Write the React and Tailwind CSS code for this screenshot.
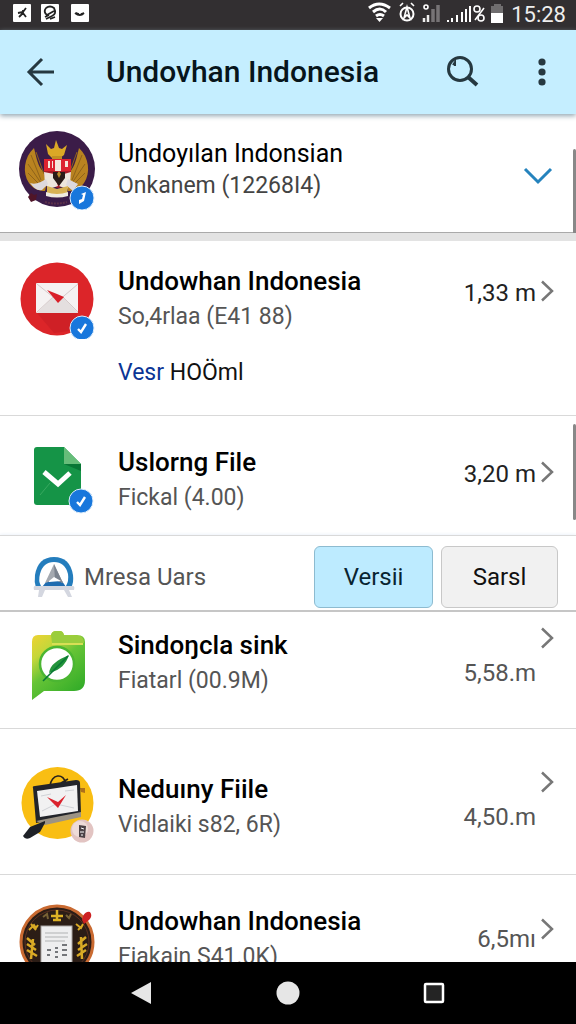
import React from "react";

function Badge({ x, y, mark }) {
  return (
    <g>
      <circle cx={x} cy={y} r="12" fill="#1877dc" stroke="#dcecfb" strokeWidth="1" />
      {mark || (
        <path d={`M${x - 4} ${y + 1}l3 3 5-8`} fill="none" stroke="#fff" strokeWidth="2.4" />
      )}
    </g>
  );
}

const iconClass = "h-20 w-20 shrink-0";

function GarudaIcon() {
  return (
    <svg viewBox="18 130 80 80" className={iconClass} aria-hidden="true">
      <circle cx="57" cy="169" r="38" fill="#3b1c48" />
      <path d="M34 148c-10 9-12 25-5 35 4 6 10 8 16 8l3-13-7-9c-4-6-5-14-7-21z" fill="#b98320" />
      <path d="M79 148c10 9 12 25 5 35-4 6-10 8-16 8l-3-13 7-9c4-6 5-14 7-21z" fill="#b98320" />
      <path d="M31 155l10 25M28 164l13 19M28 173l13 13M36 152l8 22M82 155l-10 25M85 164l-13 19M85 173l-13 13M77 152l-8 22" fill="none" stroke="#8f631a" strokeWidth="1" />
      <path d="M46 144l5 5 3-1 2-8 3 8 3 1 5-4-3 10-4 3h-8l-4-4z" fill="#dba826" />
      <path d="M52 156h10v5H52z" fill="#c18f22" />
      <path d="M44 159h27v13c0 8-6 14-13 16-8-2-14-8-14-16z" fill="#a81b28" />
      <path d="M44 159h27v12H44z" fill="#dc2330" />
      <path d="M55 160h6v11h-6zM48 161h2v7h-2zM52 161h1v7h-1zM65 161h3v6h-3z" fill="#f4e7dc" />
      <path d="M44 172l10 2 4 12-9 3-4-5zM71 172l-7 2-5 12 8 3 3-5z" fill="#ede6dd" />
      <path d="M53 172h12v6l-6 8-6-8z" fill="#291b18" />
      <path d="M57 174l2-3 2 3-2 4z" fill="#bb8c29" />
      <path d="M30 183c6 2 11-1 16-4l2 5-6 6c-5 1-8-2-12-7zM68 179l10 5-5 7-7-6z" fill="#ddd9de" />
      <path d="M47 186l10 3 11-3-1 9q-10 3-20 0z" fill="#d8b254" />
      <path d="M46 192q11 4 22 0v4q-11 3-22 0z" fill="#f0ebdf" />
      <path d="M28 197l3-4 3 2 3-1-1 6-5 2z" fill="#501528" />
      <path d="M45 202q11 3 22 0" fill="none" stroke="#5b3049" strokeWidth="2" strokeDasharray="2 1" />
      <Badge x={82} y={198} mark={<path d="M81 194l5-2-2 9-5 3v-4l3-1 1-4z" fill="#fff" />} />
    </svg>
  );
}

function MailIcon() {
  return (
    <svg viewBox="18 259 80 80" className={iconClass} aria-hidden="true">
      <circle cx="57" cy="299" r="36.5" fill="#dc2529" />
      <path d="M37 313h41l-9 18-15 2z" fill="#cf2026" />
      <rect x="36" y="283" width="42" height="30" rx="1" fill="#f5f2f2" />
      <path d="M37 313l16-16 5 4 5-4 15 16z" fill="#e4dfdf" />
      <path d="M37 284l21 17 20-17M37 312l16-15M78 312l-15-15" fill="none" stroke="#d5caca" strokeWidth="1" />
      <path d="M47 290l10 4 7 3-6 6z" fill="#d92029" />
      <Badge x={82} y={328} />
    </svg>
  );
}

function FileIcon() {
  return (
    <svg viewBox="18 440 80 80" className={iconClass} aria-hidden="true">
      <path d="M37 447h27l17 17v38q0 3-3 3H37q-3 0-3-3v-52q0-3 3-3z" fill="#159447" />
      <path d="M64 447l17 17H64z" fill="#66bd79" />
      <path d="M64 464h17v7z" fill="#087635" />
      <path d="M50 483l-10 12" stroke="#38a960" strokeWidth="1" />
      <path d="M44 472l14 12 12-11" fill="none" stroke="#fff" strokeWidth="5" />
      <Badge x={81} y={501} />
    </svg>
  );
}

function LeafIcon() {
  return (
    <svg viewBox="18 623 80 80" className={iconClass} aria-hidden="true">
      <defs>
        <linearGradient id="leaf" x1="0" y1="0" x2=".65" y2="1">
          <stop offset="0" stopColor="#f5d231" />
          <stop offset=".3" stopColor="#c5d73a" />
          <stop offset=".55" stopColor="#66c436" />
          <stop offset="1" stopColor="#35ad29" />
        </linearGradient>
      </defs>
      <path d="M38 635h13q1-4 5-4h4q3 0 4 4h13q8 0 8 7v38q0 11-11 11H44l-12 9v-58q0-7 6-7z" fill="url(#leaf)" />
      <path d="M51 635q1-4 5-4h4q3 0 4 4l16 1q4 2 4 7H52z" fill="#9acd3d" />
      <path d="M52 644h31" stroke="#d8df55" strokeWidth="2" />
      <circle cx="57" cy="664" r="17" fill="#fff" stroke="#4bb632" strokeWidth="2.5" />
      <path d="M49 673c1-8 8-13 20-18-3 9-9 15-17 17z" fill="#24943b" />
      <path d="M43 681l25-25" stroke="#087834" strokeWidth="1.6" />
    </svg>
  );
}

function BoardIcon() {
  return (
    <svg viewBox="18 767 80 80" className={iconClass} aria-hidden="true">
      <circle cx="57.500" cy="803" r="36" fill="#f9be13" />
      <path d="M50 786c1-12 14-14 16-2M61 783l7-4" fill="none" stroke="#28221d" strokeWidth="1.6" />
      <path d="M80 788h5v5l-4-1z" fill="#ad701b" />
      <path d="M33 788q-1-2 2-2l41-6q4 0 4 3l1 31-45 9z" fill="#22242a" />
      <path d="M37 791l40-6 1 26-38 6z" fill="#f1f1f2" />
      <path d="M41 796l10-2M65 791l9-1M42 811l14-7 18 4" fill="none" stroke="#d0d2d7" strokeWidth="1" />
      <path d="M47 797l11 11 8-13-8 7z" fill="#db222d" />
      <path d="M36 821l45-9v5l-36 8z" fill="#9c9384" />
      <path d="M45 821l-15 6-7 9q2 4 7 2l10-6 5-9z" fill="#1e2127" />
      <circle cx="82" cy="831" r="11.500" fill="#e2c4c2" />
      <circle cx="80" cy="829" r="8" fill="#eedbd8" />
      <path d="M79 825l7 1-1 12-6-1z" fill="#4b4146" />
      <path d="M81 828l3 1M80 832h4M81 835h2" stroke="#fff" strokeWidth="1" />
    </svg>
  );
}

function SealIcon() {
  return (
    <svg viewBox="18 900 80 80" className={iconClass} aria-hidden="true">
      <circle cx="57" cy="943" r="36" fill="#2b1d16" stroke="#c96a31" strokeWidth="3" />
      <circle cx="57" cy="943" r="32" fill="none" stroke="#5b3021" strokeWidth="1" />
      <path d="M51 917h12M57 911v11M53 921h8" stroke="#deb226" strokeWidth="2.500" />
      <path d="M43 918l4-3 1 5M66 916l3 3 2-4" fill="none" stroke="#786235" strokeWidth="2" />
      <path d="M29 931l5-5 2 3 2-3M31 925l5 6M76 925l5 4 2-4M78 931l4-4" fill="none" stroke="#d9aa25" strokeWidth="2" />
      <path d="M27 939l8 7M27 945l9 6M27 951l10 6M33 940l-2 20M86 938l-8 7M87 945l-9 6M86 951l-9 6M81 938l1 22" stroke="#d9aa25" strokeWidth="2.500" />
      <path d="M83 917q3-5 7-4 3 4-1 8l-5 4-2-4z" fill="#cd2021" />
      <rect x="41" y="927" width="31" height="42" fill="#eeeeef" stroke="#aaa6a3" />
      <path d="M45 934h23M45 938h23M45 942h20" stroke="#c5c6c8" strokeWidth="1.500" />
      <path d="M47 951h4M47 956h3M55 949h3M55 953h3M55 958h3M62 946h5M62 951h5M62 956h5" stroke="#74767a" strokeWidth="2" />
    </svg>
  );
}

function Chevron() {
  return (
    <svg viewBox="0 0 16 24" className="h-6 w-4 shrink-0" fill="none" stroke="#777" strokeWidth="2.500" aria-hidden="true">
      <path d="M2 2.500l10 9.500-10 9.500" />
    </svg>
  );
}

const trailing = {
  inline: { amount: "self-center pb-3", chevron: "self-center pb-4" },
  stacked: { amount: "self-end pb-3", chevron: "self-start pt-[3px]" },
  raised: { amount: "self-center", chevron: "self-center pb-5" },
};

function Row({ icon, title, sub, amount, layout = "inline", pad, tone = "text-[#222]", detail }) {
  return (
    <li className={`border-b border-[#d9d9d9] ${pad}`}>
      <div className="flex h-20 items-center pl-[18px] pr-5">
        {icon}
        <div className="ml-5 min-w-0 flex-1 whitespace-nowrap leading-9">
          <h2 className="text-[26px] font-medium text-black">{title}</h2>
          <p className="text-[23px] text-[#555]">{sub}</p>
        </div>
        <div className="flex h-full gap-1">
          <span className={`text-[24px] leading-9 ${tone} ${trailing[layout].amount}`}>{amount}</span>
          <span className={trailing[layout].chevron}><Chevron /></span>
        </div>
      </div>
      {detail}
    </li>
  );
}

function StatusBar() {
  return (
    <div className="flex h-[30px] shrink-0 items-center justify-between bg-[#322f31] pl-3 pr-[10px] text-white">
      <svg viewBox="12 0 80 30" className="h-[30px] w-20" aria-hidden="true">
        <g fill="#fff">
          <rect x="13" y="4" width="18" height="18" rx="1" />
          <rect x="41" y="4" width="18" height="18" rx="1" />
          <rect x="71" y="4" width="18" height="18" rx="1" />
        </g>
        <g fill="none" stroke="#222" strokeWidth="1.800">
          <path d="M18 13l5-1 3-4M19 17l4-4 3 4M23 10v3" />
          <path d="M46 8q4-3 8 0 3 6-2 8l-6 3M46 8q-3 4 1 7l7-4M45 17l4-2M50 19l5-2" />
          <path d="M75 13q5 4 9 0M76 13l3 1M81 14l3-1" />
        </g>
      </svg>
      <div className="flex items-center gap-2">
        <svg viewBox="370 0 136 30" className="h-[30px] w-[136px]" aria-hidden="true">
          <g fill="none" stroke="#fff">
            <path d="M372 8q10-8 21 0M376 12q7-6 13 0M379 16q4-3 8 0" strokeWidth="3" />
            <circle cx="410" cy="14" r="6.500" strokeWidth="2" />
            <path d="M410 7l-3 11 3-3 3 3zM403 6l3-3M414 3l3 3" strokeWidth="1.600" />
            <circle cx="429" cy="7" r="2" strokeWidth="1.600" />
            <circle cx="480" cy="9" r="3" strokeWidth="1.600" />
            <circle cx="484" cy="18" r="3" strokeWidth="1.600" />
            <path d="M487 8l-9 12" strokeWidth="1.600" />
          </g>
          <path d="M379 18h7l-3.500 4z" fill="#fff" />
          <path d="M427 22v-4M431 22v-7" stroke="#eee" strokeWidth="2.500" />
          <path d="M436 22V9M441 22V5" stroke="#777476" strokeWidth="3.500" />
          <path d="M451 22v-2M455 22v-4M460 22v-7M465 22V12M469 22V9M473 22V6" stroke="#fff" strokeWidth="2" />
          <path d="M494 6h3V4h7v2h4v7h-14z" fill="#6f6d6e" />
          <path d="M494 13h14v10h-14z" fill="#fff" />
        </svg>
        <span className="text-[22px] leading-7 text-[#eee]">15:28</span>
      </div>
    </div>
  );
}

export default function App() {
  return (
    <div className="flex h-screen flex-col overflow-hidden bg-white font-['Roboto','Liberation_Sans',sans-serif]">
      <StatusBar />
      <header className="z-10 flex h-[84px] shrink-0 items-center bg-[#c5eeff] pl-5 pr-4 text-[#263840] shadow-[0_2px_5px_#94a7b3]">
        <button aria-label="Back" className="flex h-12 w-10 items-center justify-center">
          <svg viewBox="0 0 40 40" className="size-10" fill="none" stroke="currentColor" strokeWidth="3">
            <path d="M34 20H9M22 7L9 20l13 13" />
          </svg>
        </button>
        <h1 className="ml-[46px] flex-1 whitespace-nowrap text-[30px] font-medium leading-10 text-[#07151c]">Undovhan Indonesia</h1>
        <button aria-label="Search" className="flex size-10 items-center justify-center">
          <svg viewBox="442 52 40 40" className="size-10" fill="none" stroke="currentColor">
            <circle cx="460" cy="69" r="11.5" strokeWidth="3" />
            <path d="M468 77l9 8" strokeWidth="4" />
            <path d="M453 65l2-3v4" strokeWidth="2" />
          </svg>
        </button>
        <button aria-label="More options" className="ml-[42px] flex h-10 w-9 items-center justify-center">
          <svg viewBox="0 0 36 40" className="h-10 w-9" fill="currentColor">
            <circle cx="18" cy="10" r="3.600" />
            <circle cx="18" cy="20" r="3.600" />
            <circle cx="18" cy="30" r="3.600" />
          </svg>
        </button>
      </header>

      <main className="min-h-0 flex-1 overflow-hidden">
        <section className="relative border-b-8 border-[#e3e3e3]">
          <div className="flex items-center border-b border-[#aaa] pb-[22px] pl-[18px] pr-5 pt-4">
            <GarudaIcon />
            <div className="ml-5 flex-1 whitespace-nowrap leading-8">
              <h2 className="text-[25px] text-black">Undoyılan Indonsian</h2>
              <p className="text-[23px] text-[#444]">Onkanem (12268I4)</p>
            </div>
            <button aria-label="Expand" className="mt-3 flex h-8 w-9 items-center justify-center">
              <svg viewBox="0 0 36 32" className="h-8 w-9" fill="none" stroke="#2583bd" strokeWidth="3">
                <path d="M5 9l13 13L31 9" />
              </svg>
            </button>
          </div>
          <div className="absolute bottom-0 right-0 h-[84px] w-[3px] rounded-t bg-[#888]" />
        </section>

        <ul>
          <Row
            icon={<MailIcon />}
            title="Undowhan Indonesia"
            sub="So,4rlaa (E41 88)"
            amount="1,33 m"
            pad="pt-[18px] pb-6"
            detail={
              <p className="mt-4 pl-[118px] text-[23px] leading-9 text-[#111]">
                <a href="#versi" className="text-[#0b3595]">Vesr</a> HOÖml
              </p>
            }
          />
        </ul>
        <div className="relative">
          <ul>
            <Row icon={<FileIcon />} title="Uslorng File" sub="Fickal (4.00)" amount="3,20 m" pad="pt-6 pb-[15px] border-[#b3c3d6]" />
          </ul>
          <div className="absolute right-0 top-2 h-24 w-[3px] rounded bg-[#888]" />
        </div>

        <section className="flex items-center border-b-2 border-[#c6c6c6] pb-[2px] pl-8 pr-[18px] pt-[10px] shadow-[0_-2px_3px_#eef3fa]">
          <svg viewBox="32 552 44 48" className="h-12 w-11 shrink-0" aria-hidden="true">
            <path d="M36 587q-2-6-1-13 3-18 19-18t19 18q1 7-2 13z" fill="#247dbd" />
            <path d="M41 585q-3-5-1-12 3-12 14-12t14 12q1 7-2 12z" fill="#fff" />
            <path d="M47 580h15l4 6H42z" fill="#1f6cb0" />
            <path d="M45 582l9-19 9 19-8-3z" fill="#a4a9b0" />
            <path d="M54 563l9 19-8-3z" fill="#7b838e" />
            <path d="M49 580l5-4 7 4-12 1z" fill="#fff" />
            <path d="M35 585h38q2 0 1 4h-5l3 7h-4l-4-7H45l-3 7h-4l1-7h-5q-1-4 1-4z" fill="#d4d7e0" />
          </svg>
          <span className="ml-2 flex-1 whitespace-nowrap text-[24px] leading-9 text-[#555]">Mresa Uars</span>
          <button className="h-[62px] w-[119px] rounded-md border border-[#8dbbd0] bg-[#bdebff] text-[24px] text-[#092431]">Versii</button>
          <button className="ml-2 h-[62px] w-[117px] rounded-md border border-[#c8c8c8] bg-[#f1f1f1] text-[24px] text-[#111]">Sarsl</button>
        </section>

        <ul>
          <Row icon={<LeafIcon />} title="Sindoŋcla sink" sub="Fiatarl (00.9M)" amount="5,58.m" layout="stacked" tone="text-[#555]" pad="pt-[11px] pb-[25px]" />
          <Row icon={<BoardIcon />} title="Neduıny Fiile" sub="Vidlaiki s82, 6R)" amount="4,50.m" layout="stacked" tone="text-[#555]" pad="pt-[38px] pb-[27px]" />
          <Row icon={<SealIcon />} title="Undowhan Indonesia" sub="Fiakain S41.0K)" amount="6,5mı" layout="raised" tone="text-[#555]" pad="pt-6 pb-6" />
        </ul>
      </main>

      <nav className="flex h-[62px] shrink-0 items-center justify-center gap-[106px] bg-black">
        <button aria-label="Back" className="flex size-10 items-center justify-center">
          <svg viewBox="0 0 40 40" className="size-10"><path d="M9 20L29 9v22z" fill="#e6e6e6" /></svg>
        </button>
        <button aria-label="Home" className="flex size-10 items-center justify-center">
          <svg viewBox="0 0 40 40" className="size-10"><circle cx="20" cy="20" r="11.500" fill="#e6e6e6" /></svg>
        </button>
        <button aria-label="Recent apps" className="flex size-10 items-center justify-center">
          <svg viewBox="0 0 40 40" className="size-10"><rect x="11" y="11" width="18" height="18" rx="1" fill="#242424" stroke="#fff" strokeWidth="2.500" /></svg>
        </button>
      </nav>
    </div>
  );
}
